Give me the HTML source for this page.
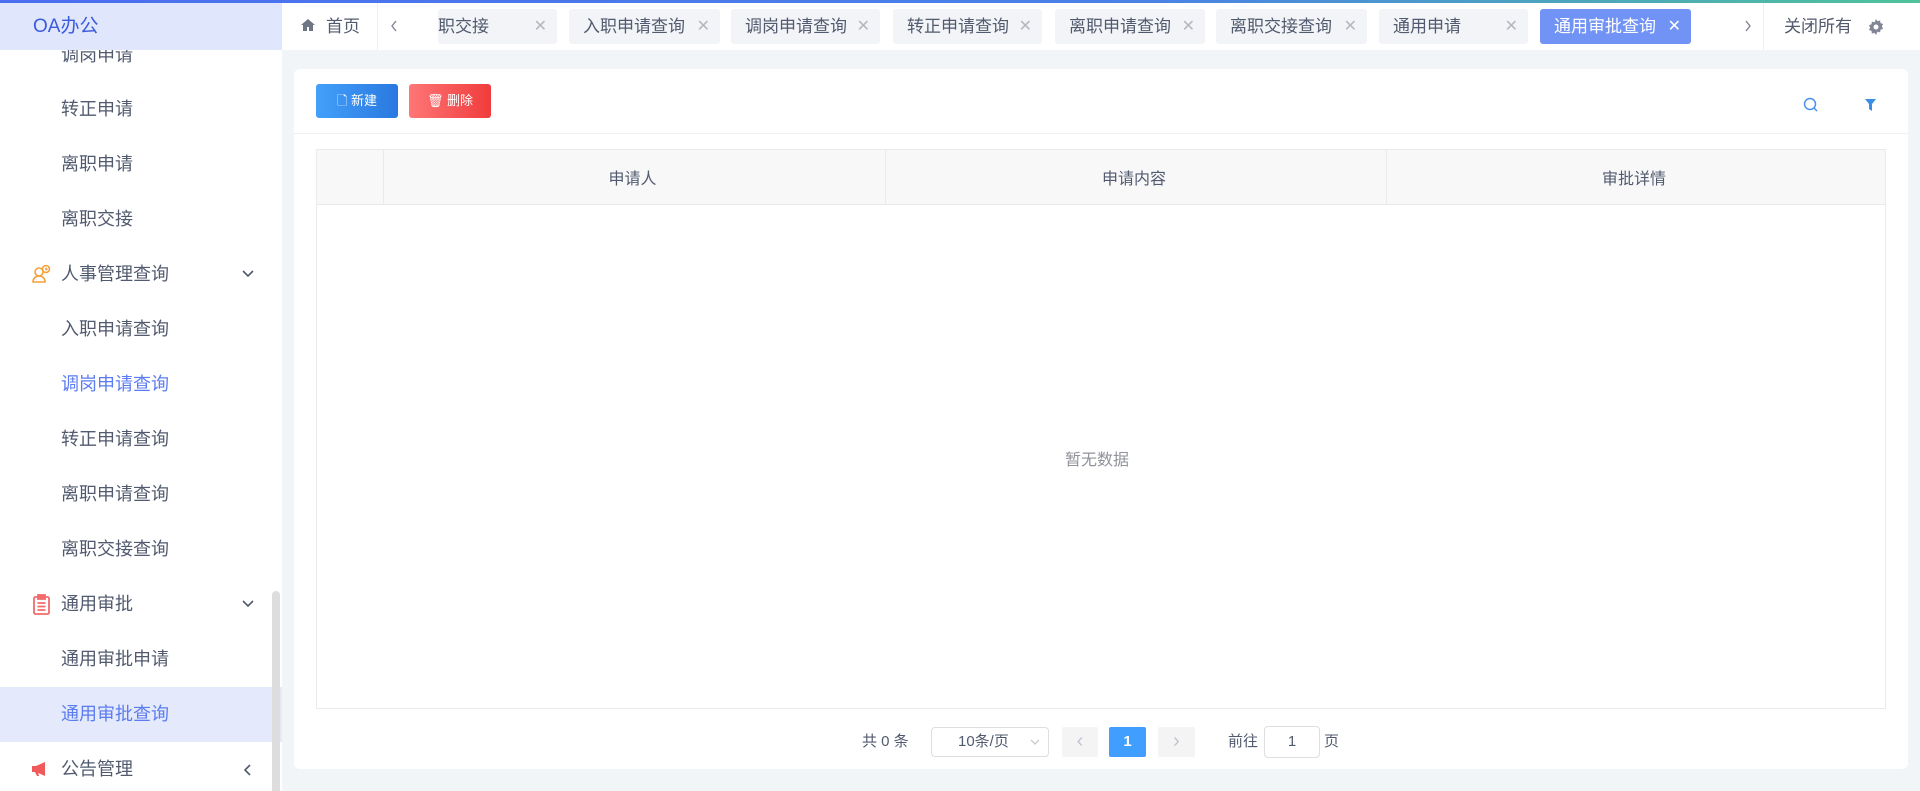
<!DOCTYPE html>
<html><head><meta charset="utf-8"><style>
*{margin:0;padding:0;box-sizing:border-box}
body{width:1920px;height:791px;overflow:hidden;background:#f2f5f8;font-family:"Liberation Sans","Noto Sans CJK SC",sans-serif;color:#515a6e;position:relative}
.abs{position:absolute}
.topline{left:0;top:0;width:1920px;height:3px;background:linear-gradient(90deg,#4b6ef0,#4a82e6 60%,#4fc39a)}
.side{left:0;top:3px;width:282px;height:788px;background:#fff;overflow:hidden}
.logo{left:0;top:0;width:282px;height:47px;background:#e0e6fc;color:#3b5bdb;font-size:19px;line-height:47px;padding-left:33px;z-index:2}
.mi{position:absolute;left:0;width:282px;height:55px;line-height:55px;font-size:18px;color:#515a6e;padding-left:61px}
.mi.sel{color:#5b7cf0}
.mi.act{background:#e4e9fb;color:#5b7cf0}
.chev{position:absolute;left:241px;top:22px}
.header{left:282px;top:3px;width:1638px;height:47px;background:#fff}
.tab{position:absolute;top:6px;height:35px;line-height:35px;background:#f2f4f7;border-radius:3px;font-size:17px;color:#515a6e;padding-left:14px}
.tab .x{position:absolute;right:10px;top:0;color:#b4b8bf;font-size:16px}
.tab.on{background:#7093f5;color:#fff}
.tab.on .x{color:#fff}
.card{left:294px;top:69px;width:1614px;height:700px;background:#fff;border-radius:6px}
.btn{position:absolute;top:15px;height:34px;width:82px;border-radius:3px;color:#fff;font-size:13px;line-height:34px;text-align:center}
.th{position:absolute;top:0;height:55px;line-height:55px;text-align:center;font-size:16px;color:#515a6e}
</style></head><body>
<div class="abs topline"></div>
<div class="abs side">
 <div class="abs logo">OA办公</div>
 <div class="mi" style="top:25px">调岗申请</div>
 <div class="mi" style="top:79px">转正申请</div>
 <div class="mi" style="top:134px">离职申请</div>
 <div class="mi" style="top:189px">离职交接</div>
 <div class="mi" style="top:244px"><svg class="abs" style="left:31px;top:17px" width="20" height="20" viewBox="0 0 20 20" fill="none" stroke="#f5a03a" stroke-width="1.6"><circle cx="8" cy="8" r="4"/><path d="M2 18c0-4 3-6 6-6s6 2 6 6z"/><circle cx="15" cy="5" r="3.5"/><path d="M15 3.5v2h1.5"/></svg>人事管理查询<svg class="chev" width="14" height="10" viewBox="0 0 14 10"><path d="M2 2l5 5 5-5" fill="none" stroke="#515a6e" stroke-width="1.6"/></svg></div>
 <div class="mi" style="top:299px">入职申请查询</div>
 <div class="mi sel" style="top:354px">调岗申请查询</div>
 <div class="mi" style="top:409px">转正申请查询</div>
 <div class="mi" style="top:464px">离职申请查询</div>
 <div class="mi" style="top:519px">离职交接查询</div>
 <div class="mi" style="top:574px"><svg class="abs" style="left:33px;top:17px" width="17" height="21" viewBox="0 0 17 21" fill="none" stroke="#f26b6b" stroke-width="1.8"><rect x="1" y="3" width="15" height="17" rx="1.5"/><rect x="5" y="1" width="7" height="4" fill="#f26b6b"/><path d="M4.5 9h8M4.5 12.5h8M4.5 16h8"/></svg>通用审批<svg class="chev" width="14" height="10" viewBox="0 0 14 10"><path d="M2 2l5 5 5-5" fill="none" stroke="#515a6e" stroke-width="1.6"/></svg></div>
 <div class="mi" style="top:629px">通用审批申请</div>
 <div class="mi act" style="top:684px">通用审批查询</div>
 <div class="mi" style="top:739px"><svg class="abs" style="left:31px;top:19px" width="18" height="16" viewBox="0 0 18 16"><path d="M1 5h4l9-4v14l-9-4H1z" fill="#f05a5a"/><path d="M4 11l2 4h2l-1-4z" fill="#f05a5a"/></svg>公告管理<svg class="chev" style="left:243px;top:21px" width="10" height="14" viewBox="0 0 10 14"><path d="M7 2L2 7l5 5" fill="none" stroke="#515a6e" stroke-width="1.6"/></svg></div>
 <div class="abs" style="left:272px;top:588px;width:8px;height:210px;background:#ddd;border-radius:4px"></div>
</div>
<div class="abs header">
 <svg class="abs" style="left:18px;top:15px" width="16" height="14" viewBox="0 0 16 14"><path d="M8 1L1 7h2v6h4V9h2v4h4V7h2z" fill="#707784"/></svg>
 <div class="abs" style="left:44px;top:0;line-height:47px;font-size:17px">首页</div>
 <div class="abs" style="left:95px;top:0;width:1px;height:47px;background:#eee"></div>
 <svg class="abs" style="left:108px;top:17px" width="8" height="12" viewBox="0 0 8 12"><path d="M6 1L2 6l4 5" fill="none" stroke="#808695" stroke-width="1.4"/></svg>
 <div class="tab" style="left:156px;width:119px;padding-left:0">职交接<span class="x">✕</span></div>
 <div class="tab" style="left:287px;width:151px">入职申请查询<span class="x">✕</span></div>
 <div class="tab" style="left:449px;width:149px">调岗申请查询<span class="x">✕</span></div>
 <div class="tab" style="left:611px;width:149px">转正申请查询<span class="x">✕</span></div>
 <div class="tab" style="left:773px;width:150px">离职申请查询<span class="x">✕</span></div>
 <div class="tab" style="left:934px;width:151px">离职交接查询<span class="x">✕</span></div>
 <div class="tab" style="left:1097px;width:149px">通用申请<span class="x">✕</span></div>
 <div class="tab on" style="left:1258px;width:151px">通用审批查询<span class="x">✕</span></div>
 <svg class="abs" style="left:1462px;top:17px" width="8" height="12" viewBox="0 0 8 12"><path d="M2 1l4 5-4 5" fill="none" stroke="#808695" stroke-width="1.4"/></svg>
 <div class="abs" style="left:1481px;top:0;width:1px;height:47px;background:#eee"></div>
 <div class="abs" style="left:1502px;top:0;line-height:47px;font-size:17px">关闭所有</div>
 <svg class="abs" style="left:1586px;top:16px" width="16" height="16" viewBox="0 0 16 16"><path d="M8 0l1.5 2.2 2.6-.8.4 2.7 2.6.9-1.3 2.4 1.3 2.4-2.6.9-.4 2.7-2.6-.8L8 16l-1.5-2.2-2.6.8-.4-2.7-2.6-.9L2.2 8.6.9 6.2l2.6-.9.4-2.7 2.6.8z" fill="#808695"/><circle cx="8" cy="8" r="2.5" fill="#fff"/></svg>
</div>
<div class="abs card">
 <div class="btn" style="left:22px;background:linear-gradient(90deg,#42a0fa,#2a78e0)">🗋 新建</div>
 <div class="btn" style="left:115px;background:linear-gradient(90deg,#ff7676,#f03c3c)">🗑 删除</div>
 <svg class="abs" style="left:1509px;top:28px" width="16" height="16" viewBox="0 0 16 16" fill="none" stroke="#4a90f0" stroke-width="1.5"><circle cx="7" cy="7" r="5.5"/><path d="M11 11l3 3"/></svg>
 <svg class="abs" style="left:1571px;top:30px" width="11" height="12" viewBox="0 0 11 12"><path d="M0 0h11L7 5v7L4 10V5z" fill="#3a8ee6"/></svg>
 <div class="abs" style="left:0;top:64px;width:1614px;height:1px;background:#eef0f3"></div>
 <div class="abs" style="left:22px;top:80px;width:1570px;height:560px;border:1px solid #e8eaec">
  <div class="abs" style="left:0;top:0;width:1568px;height:55px;background:#f8f8f9;border-bottom:1px solid #e8eaec"></div>
  <div class="abs" style="left:66px;top:0;width:1px;height:55px;background:#e8eaec"></div>
  <div class="abs" style="left:568px;top:0;width:1px;height:55px;background:#e8eaec"></div>
  <div class="abs" style="left:1069px;top:0;width:1px;height:55px;background:#e8eaec"></div>
  <div class="th" style="left:65px;width:501px;top:2px">申请人</div>
  <div class="th" style="left:567px;width:500px;top:2px">申请内容</div>
  <div class="th" style="left:1068px;width:498px;top:2px">审批详情</div>
  <div class="abs" style="left:-4px;top:296px;width:1568px;text-align:center;font-size:16px;color:#909399">暂无数据</div>
 </div>
 <div class="abs" style="left:568px;top:662px;font-size:15px;line-height:22px">共 0 条</div>
 <div class="abs" style="left:637px;top:658px;width:118px;height:30px;border:1px solid #dcdee2;border-radius:4px;font-size:15px;line-height:28px;padding-left:26px">10条/页<svg class="abs" style="right:8px;top:11px" width="10" height="7" viewBox="0 0 10 7"><path d="M1 1l4 4 4-4" fill="none" stroke="#c0c4cc" stroke-width="1.2"/></svg></div>
 <div class="abs" style="left:768px;top:658px;width:36px;height:30px;background:#f4f4f5;border-radius:2px;color:#c0c4cc;text-align:center;line-height:28px;font-size:20px">‹</div>
 <div class="abs" style="left:815px;top:658px;width:37px;height:30px;background:#409eff;border-radius:2px;color:#fff;text-align:center;line-height:30px;font-size:15px;font-weight:bold">1</div>
 <div class="abs" style="left:864px;top:658px;width:37px;height:30px;background:#f4f4f5;border-radius:2px;color:#c0c4cc;text-align:center;line-height:28px;font-size:20px">›</div>
 <div class="abs" style="left:934px;top:662px;font-size:15px;line-height:22px">前往</div>
 <div class="abs" style="left:970px;top:657px;width:56px;height:32px;border:1px solid #dcdee2;border-radius:4px;text-align:center;line-height:30px;font-size:15px">1</div>
 <div class="abs" style="left:1030px;top:662px;font-size:15px;line-height:22px">页</div>
</div>
</body></html>
